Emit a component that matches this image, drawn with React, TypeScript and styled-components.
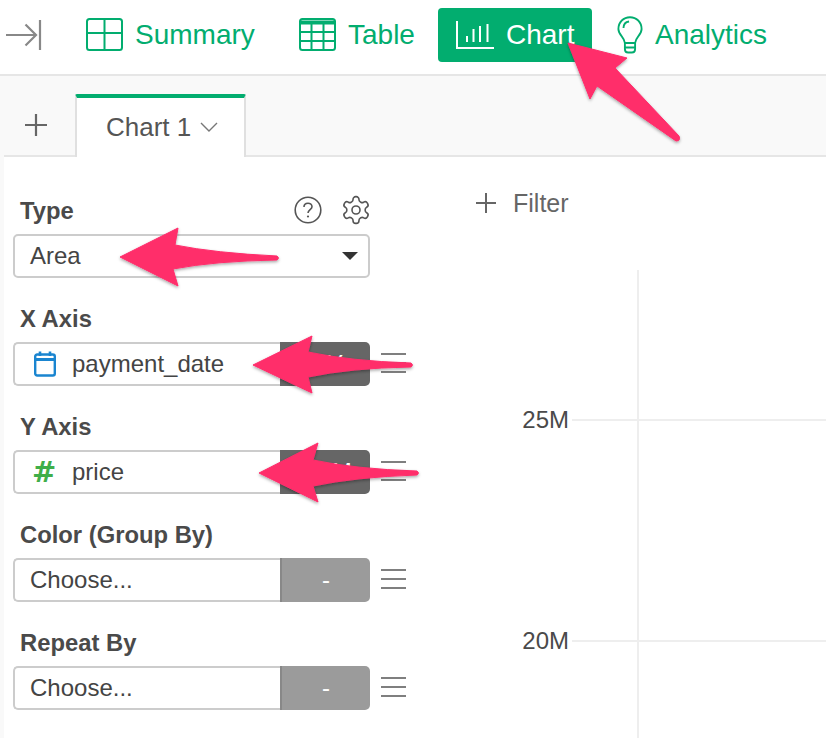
import styled, { createGlobalStyle } from "styled-components";

const GREEN = "#02ad6f";
const PINK = "#ff2d6b";

const GlobalStyle = createGlobalStyle`
  html, body {
    margin: 0;
    padding: 0;
    background: #fff;
  }
  body {
    font-family: "Liberation Sans", Arial, sans-serif;
    color: #4a4a4a;
  }
`;

const Page = styled.div`
  position: relative;
  width: 826px;
  height: 738px;
  overflow: hidden;
  display: flex;
  flex-direction: column;
  background: #f9f9f9;
`;

const TopBar = styled.div`
  height: 74px;
  flex: none;
  display: flex;
  align-items: flex-start;
  padding: 8px 0 0 6px;
  box-sizing: border-box;
  background: #fff;
`;

const NavItem = styled.div<{ $active?: boolean; $left: number; $width: number }>`
  display: flex;
  align-items: center;
  height: 54px;
  width: ${(p) => p.$width}px;
  margin-left: ${(p) => p.$left}px;
  box-sizing: border-box;
  border-radius: 4px;
  font-size: 28px;
  color: ${(p) => (p.$active ? "#fff" : GREEN)};
  background: ${(p) => (p.$active ? GREEN : "transparent")};
  flex: none;
`;

const NavLabel = styled.span<{ $gap: number }>`
  margin-left: ${(p) => p.$gap}px;
`;

const ActiveIconSlot = styled.span`
  display: flex;
  padding-left: 18px;
`;

const TabBar = styled.div`
  height: 81px;
  flex: none;
  box-sizing: border-box;
  border-top: 2px solid #e6e6e6;
  display: flex;
  align-items: flex-end;
  padding-left: 25px;
`;

const AddTab = styled.div`
  width: 50px;
  height: 60px;
  flex: none;
  display: flex;
  align-items: center;
`;

const Tab = styled.div`
  position: relative;
  z-index: 1;
  width: 171px;
  height: 63px;
  margin-bottom: -2px;
  flex: none;
  box-sizing: border-box;
  background: #fff;
  border-top: 4px solid ${GREEN};
  border-left: 2px solid #e0e0e0;
  border-right: 2px solid #e0e0e0;
  border-radius: 2px 2px 0 0;
  display: flex;
  align-items: center;
  padding: 0 0 2px 29px;
  font-size: 26px;
  line-height: 1;
  color: #555;
  gap: 9px;
`;

const Body = styled.div`
  flex: 1;
  display: flex;
  margin-left: 4px;
  background: #fff;
  border-top: 2px solid #e6e6e6;
`;

const Side = styled.div`
  width: 406px;
  flex: none;
  padding: 36px 0 0 9px;
  box-sizing: border-box;
`;

const Section = styled.div`
  margin-bottom: 23px;
`;

const LabelRow = styled.div`
  display: flex;
  align-items: center;
  justify-content: space-between;
  width: 357px;
  height: 33px;
  padding-left: 7px;
  box-sizing: border-box;
  margin-bottom: 8px;
`;

const Label = styled.div`
  font-size: 23.8px;
  font-weight: 700;
  color: #4a4a4a;
  line-height: 33px;
  margin-top: 2px;
`;

const Tools = styled.div`
  display: flex;
  align-items: center;
  gap: 18px;
  margin-right: -2px;
`;

const Row = styled.div`
  display: flex;
  align-items: center;
  height: 44px;
`;

const SelectBox = styled.div`
  width: 357px;
  height: 44px;
  box-sizing: border-box;
  border: 2px solid #ccc;
  border-radius: 5px;
  display: flex;
  align-items: center;
  justify-content: space-between;
  padding: 0 10px 0 15px;
  font-size: 24px;
  color: #444;
`;

const Field = styled.div`
  width: 267px;
  height: 44px;
  box-sizing: border-box;
  border: 2px solid #ccc;
  border-right: 0;
  border-radius: 5px 0 0 5px;
  display: flex;
  align-items: center;
  padding-left: 15px;
  font-size: 24px;
  color: #444;
  flex: none;
`;

const FieldIcon = styled.span`
  width: 42px;
  box-sizing: border-box;
  padding-left: 4px;
  flex: none;
  display: flex;
  align-items: center;
`;

const Hash = styled(FieldIcon)`
  font-family: "DejaVu Sans", sans-serif;
  font-size: 29px;
  line-height: 1;
  font-weight: 700;
  color: #3fae49;
  padding-left: 2px;
`;

const Agg = styled.div<{ $dark?: boolean }>`
  width: 90px;
  height: 44px;
  flex: none;
  box-sizing: border-box;
  background: ${(p) => (p.$dark ? "#666" : "#9b9b9b")};
  border-left: ${(p) => (p.$dark ? "0" : "2px solid #888")};
  border-radius: 0 5px 5px 0;
  color: #fff;
  font-size: 24px;
  display: flex;
  align-items: center;
  justify-content: center;
`;

const Menu = styled.svg`
  margin: -3px 0 0 11px;
  flex: none;
`;

const Chart = styled.div`
  flex: 1;
  min-width: 0;
`;

const FilterRow = styled.div`
  display: flex;
  align-items: center;
  gap: 17px;
  margin: 30px 0 0 66px;
  height: 32px;
  font-size: 25px;
  color: #666;
`;

const Plot = styled.div`
  position: relative;
  height: 468px;
  margin-top: 51px;
`;

const VLine = styled.div`
  position: absolute;
  left: 227px;
  top: 0;
  bottom: 0;
  width: 2px;
  background: #eee;
`;

const Tick = styled.div<{ $top: number }>`
  position: absolute;
  top: ${(p) => p.$top}px;
  left: 0;
  right: 0;
  display: flex;
  align-items: center;
  height: 28px;
  font-size: 24px;
  color: #4a4a4a;
`;

const TickLabel = styled.span`
  width: 159px;
  text-align: right;
  flex: none;
`;

const TickLine = styled.div`
  flex: 1;
  height: 2px;
  margin-left: 3px;
  background: #eee;
`;

const Overlay = styled.svg`
  position: absolute;
  left: 0;
  top: 0;
  z-index: 2;
  pointer-events: none;
`;

function CollapseIcon() {
  return (
    <svg width="38" height="32" viewBox="0 0 38 32" fill="none" stroke="#888" strokeWidth="2.2" style={{ flex: "none" }}>
      <path d="M0 16H30M19.5 5.5L30 16L19.5 26.5" />
      <path d="M34 1V31" />
    </svg>
  );
}

function SummaryIcon() {
  return (
    <svg width="38" height="34" viewBox="0 0 38 34" fill="none" stroke={GREEN} strokeWidth="2">
      <rect x="1" y="1" width="35" height="31" rx="2.5" />
      <path d="M18.5 1V32M1 15H36" />
    </svg>
  );
}

function TableIcon() {
  return (
    <svg width="38" height="34" viewBox="0 0 38 34" fill="none" stroke={GREEN} strokeWidth="2">
      <rect x="1" y="1" width="35" height="31" rx="2.5" />
      <path d="M1 4.5H36" strokeWidth="4" />
      <path d="M1 14H36M1 23H36M12.5 5V32M24.5 5V32" />
    </svg>
  );
}

function ChartIcon() {
  return (
    <svg width="38" height="28" viewBox="0 0 38 28" fill="none" stroke="#fff" strokeWidth="2">
      <path d="M1 0V27H38" />
      <path d="M11 15V21M17.5 8V21M24 5V21M31.5 3V21" />
    </svg>
  );
}

function BulbIcon() {
  return (
    <svg width="26" height="38" viewBox="0 0 28 38" fill="none" stroke={GREEN} strokeWidth="2" preserveAspectRatio="none">
      <path d="M8.5 27C8 21 1.5 19 1.5 13C1.5 6 7 1.2 14 1.2C21 1.2 26.5 6 26.5 13C26.5 19 20 21 19.5 27Z" />
      <path d="M7 12C7 8.5 9.5 6 13 5.5" />
      <path d="M8.5 27V33C8.5 35 10 36.5 12 36.5H16C18 36.5 19.5 35 19.5 33V27M8.5 31.5H19.5" />
    </svg>
  );
}

function PlusIcon({ size, color }: { size: number; color: string }) {
  return (
    <svg width={size} height={size} viewBox="0 0 22 22" fill="none" stroke={color} strokeWidth="2.2" style={{ flex: "none" }}>
      <path d="M11 0V22M0 11H22" />
    </svg>
  );
}

function HelpIcon() {
  return (
    <svg width="28" height="28" viewBox="0 0 28 28" fill="none" stroke="#555" strokeWidth="1.6">
      <circle cx="14" cy="14" r="12.8" />
      <path d="M10 11C10 8.5 12 7.2 14 7.2C16.2 7.2 18 8.7 18 10.8C18 13.5 14 13.8 14 17" />
      <circle cx="14" cy="20.5" r="1.1" fill="#555" stroke="none" />
    </svg>
  );
}

function GearIcon() {
  return (
    <svg width="32" height="32" viewBox="0 0 24 24" fill="none" stroke="#555" strokeWidth="1.2" strokeLinecap="round" strokeLinejoin="round">
      <path d="M12.22 2h-.44a2 2 0 0 0-2 2v.18a2 2 0 0 1-1 1.73l-.43.25a2 2 0 0 1-2 0l-.15-.08a2 2 0 0 0-2.73.73l-.22.38a2 2 0 0 0 .73 2.73l.15.1a2 2 0 0 1 1 1.72v.51a2 2 0 0 1-1 1.74l-.15.09a2 2 0 0 0-.73 2.73l.22.38a2 2 0 0 0 2.73.73l.15-.08a2 2 0 0 1 2 0l.43.25a2 2 0 0 1 1 1.73V20a2 2 0 0 0 2 2h.44a2 2 0 0 0 2-2v-.18a2 2 0 0 1 1-1.73l.43-.25a2 2 0 0 1 2 0l.15.08a2 2 0 0 0 2.73-.73l.22-.39a2 2 0 0 0-.73-2.73l-.15-.08a2 2 0 0 1-1-1.74v-.5a2 2 0 0 1 1-1.74l.15-.09a2 2 0 0 0 .73-2.73l-.22-.38a2 2 0 0 0-2.73-.73l-.15.08a2 2 0 0 1-2 0l-.43-.25a2 2 0 0 1-1-1.73V4a2 2 0 0 0-2-2z" />
      <circle cx="12" cy="12" r="3" />
    </svg>
  );
}

function CalendarIcon() {
  return (
    <svg width="22" height="26" viewBox="0 0 22 26" fill="none" stroke="#1a85d0" strokeWidth="2.4">
      <rect x="1.2" y="3.5" width="19.6" height="21" rx="2" />
      <path d="M1 8.5H21" strokeWidth="3" />
      <path d="M6 0.5V5M16 0.5V5" strokeWidth="2.6" />
    </svg>
  );
}

function MenuIcon() {
  return (
    <Menu width="25" height="20" viewBox="0 0 25 20" fill="none" stroke="#555" strokeWidth="1.6">
      <path d="M0 1H25M0 10H25M0 19H25" />
    </Menu>
  );
}

// the red arrows pasted on top of the screenshot
const arrows = [
  "M568 43L627 58L615 68L679 136Q681 141 676 141L597 86L590 99Z",
  "M120 257L178 228L175 245Q215 253 277 256Q280 258 277 260Q215 261 173 269L178 286Z",
  "M253 365L312 336L308 352Q350 361 411 363Q414 365 411 367Q350 368 308 377L312 393Z",
  "M259 473L318 443L313 460Q355 469 417 471Q420 473 417 475Q355 477 313 486L318 502Z",
];

export default function App() {
  return (
    <Page>
      <GlobalStyle />
      <TopBar>
        <NavItem $left={0} $width={38}>
          <CollapseIcon />
        </NavItem>
        <NavItem $left={42} $width={213}>
          <SummaryIcon />
          <NavLabel $gap={11}>Summary</NavLabel>
        </NavItem>
        <NavItem $left={0} $width={139}>
          <TableIcon />
          <NavLabel $gap={11}>Table</NavLabel>
        </NavItem>
        <NavItem $active $left={0} $width={154}>
          <ActiveIconSlot>
            <ChartIcon />
          </ActiveIconSlot>
          <NavLabel $gap={12}>Chart</NavLabel>
        </NavItem>
        <NavItem $left={25} $width={170}>
          <BulbIcon />
          <NavLabel $gap={12}>Analytics</NavLabel>
        </NavItem>
      </TopBar>
      <TabBar>
        <AddTab>
          <PlusIcon size={22} color="#666" />
        </AddTab>
        <Tab>
          Chart 1
          <svg width="18" height="10" viewBox="0 0 18 10" fill="none" stroke="#777" strokeWidth="1.4">
            <path d="M1 1L9 9L17 1" />
          </svg>
        </Tab>
      </TabBar>
      <Body>
        <Side>
          <Section>
            <LabelRow>
              <Label>Type</Label>
              <Tools>
                <HelpIcon />
                <GearIcon />
              </Tools>
            </LabelRow>
            <Row>
              <SelectBox>
                Area
                <svg width="16" height="8" viewBox="0 0 16 8" fill="#333">
                  <path d="M0 0H16L8 8Z" />
                </svg>
              </SelectBox>
            </Row>
          </Section>
          <Section>
            <LabelRow>
              <Label>X Axis</Label>
            </LabelRow>
            <Row>
              <Field>
                <FieldIcon>
                  <CalendarIcon />
                </FieldIcon>
                payment_date
              </Field>
              <Agg $dark>MY</Agg>
              <MenuIcon />
            </Row>
          </Section>
          <Section>
            <LabelRow>
              <Label>Y Axis</Label>
            </LabelRow>
            <Row>
              <Field>
                <Hash>#</Hash>
                price
              </Field>
              <Agg $dark>SUM</Agg>
              <MenuIcon />
            </Row>
          </Section>
          <Section>
            <LabelRow>
              <Label>Color (Group By)</Label>
            </LabelRow>
            <Row>
              <Field>Choose...</Field>
              <Agg>-</Agg>
              <MenuIcon />
            </Row>
          </Section>
          <Section>
            <LabelRow>
              <Label>Repeat By</Label>
            </LabelRow>
            <Row>
              <Field>Choose...</Field>
              <Agg>-</Agg>
              <MenuIcon />
            </Row>
          </Section>
        </Side>
        <Chart>
          <FilterRow>
            <PlusIcon size={20} color="#666" />
            Filter
          </FilterRow>
          <Plot>
            <VLine />
            <Tick $top={136}>
              <TickLabel>25M</TickLabel>
              <TickLine />
            </Tick>
            <Tick $top={357}>
              <TickLabel>20M</TickLabel>
              <TickLine />
            </Tick>
          </Plot>
        </Chart>
      </Body>
      <Overlay width="826" height="738" viewBox="0 0 826 738">
        <defs>
          <filter id="arrowShadow" x="-10%" y="-10%" width="120%" height="130%">
            <feDropShadow dx="0" dy="1.5" stdDeviation="1.5" floodColor="#000" floodOpacity="0.35" />
          </filter>
        </defs>
        {arrows.map((d) => (
          <path key={d} d={d} fill={PINK} stroke={PINK} strokeWidth="1" strokeLinejoin="round" filter="url(#arrowShadow)" />
        ))}
      </Overlay>
    </Page>
  );
}
